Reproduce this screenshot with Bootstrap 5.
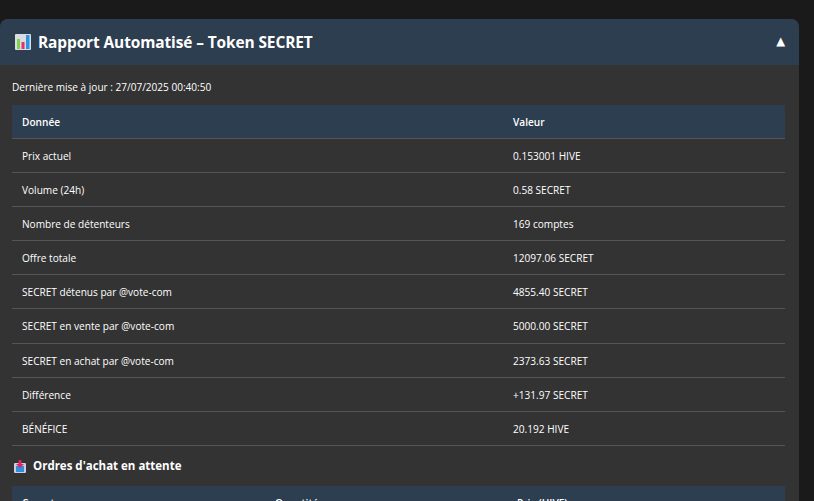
<!DOCTYPE html>
<html lang="fr">
<head>
<meta charset="utf-8">
<title>Rapport</title>
<link href="https://cdn.jsdelivr.net/npm/bootstrap@5.3.0/dist/css/bootstrap.min.css" rel="stylesheet">
<style>
html,body{height:501px;overflow:hidden}
body{background:#1a1a1a;color:#fff;font-family:"Open Sans","Noto Sans",sans-serif;padding-top:19px;padding-right:15px;font-size:10px}
.report{background:#333;border-radius:8px 8px 0 0;min-height:482px}
.report-head{background:#2c3e50;height:46px;padding:0 14px 0 15px;border-radius:8px 8px 0 0}
.report-title{font-size:15.45px;font-weight:700;margin:0;letter-spacing:-.1px;gap:7px}
.report-toggle{font-size:11.5px;line-height:1;font-family:"DejaVu Sans",sans-serif}
.report-body{padding:14px 14px 0 12px}
.stamp{font-size:10.05px;line-height:16px;margin:0 0 10px}
.data-grid{width:100%;table-layout:fixed;border-collapse:collapse;font-size:10.1px}
.data-grid th{background:#2c3e50;font-weight:600;height:33px;padding:2px 10px 0;border-bottom:1px solid #555}
.data-grid td{height:34.2px;padding:2px 10px 0;border-bottom:1px solid #555}
.col-key{width:491px}
.sub-title{font-size:11.5px;font-weight:700;margin:12px 0 12px 2px;line-height:16px;gap:7px}
.grid-three .col-a{width:253px}
.grid-three .col-b{width:242px}
</style>
</head>
<body>
<div class="report">
  <div class="report-head d-flex align-items-center justify-content-between">
    <h1 class="report-title d-flex align-items-center">
      <svg width="16" height="16" viewBox="0 0 16 16" aria-hidden="true"><rect width="16" height="16" rx="1" fill="#d9dce2"/><rect x="2" y="5" width="3" height="10" fill="#7fd44a"/><rect x="6.500" y="8" width="3" height="7" fill="#e8306e"/><rect x="11" y="1" width="3.500" height="14" fill="#2d94e0"/></svg>
      Rapport Automatisé – Token SECRET
    </h1>
    <span class="report-toggle">▲</span>
  </div>
  <div class="report-body">
    <p class="stamp">Dernière mise à jour : 27/07/2025 00:40:50</p>
    <table class="data-grid">
      <thead><tr><th class="col-key">Donnée</th><th>Valeur</th></tr></thead>
      <tbody>
        <tr><td>Prix actuel</td><td>0.153001 HIVE</td></tr>
        <tr><td>Volume (24h)</td><td>0.58 SECRET</td></tr>
        <tr><td>Nombre de détenteurs</td><td>169 comptes</td></tr>
        <tr><td>Offre totale</td><td>12097.06 SECRET</td></tr>
        <tr><td>SECRET détenus par @vote-com</td><td>4855.40 SECRET</td></tr>
        <tr><td>SECRET en vente par @vote-com</td><td>5000.00 SECRET</td></tr>
        <tr><td>SECRET en achat par @vote-com</td><td>2373.63 SECRET</td></tr>
        <tr><td>Différence</td><td>+131.97 SECRET</td></tr>
        <tr><td>BÉNÉFICE</td><td>20.192 HIVE</td></tr>
      </tbody>
    </table>
    <h2 class="sub-title d-flex align-items-center">
      <svg width="12" height="13" viewBox="0 0 12 13" aria-hidden="true"><rect x="0" y="3" width="12" height="10" rx="1" fill="#cfcbe0"/><rect x="2" y="6" width="8" height="6" fill="#2f8fdc"/><path d="M4.500 0h3v4H10L6 8 2 4h2.500z" fill="#e0245e"/></svg>
      Ordres d'achat en attente
    </h2>
    <table class="data-grid grid-three">
      <thead><tr><th class="col-a">Compte</th><th class="col-b">Quantité</th><th>Prix (HIVE)</th></tr></thead>
    </table>
  </div>
</div>
<script src="https://cdn.jsdelivr.net/npm/bootstrap@5.3.0/dist/js/bootstrap.bundle.min.js"></script>
</body>
</html>
